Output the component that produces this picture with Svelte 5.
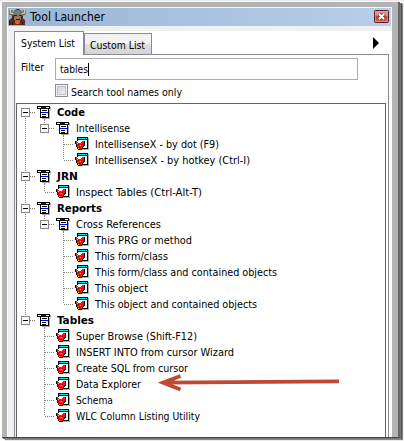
<script>
  const rows = [
    { d: 0, t: 'Code', w: 28, open: true, first: true, guides: [] },
    { d: 1, t: 'Intellisense', w: 54, open: true, last: true, guides: [1] },
    { d: 2, t: 'IntellisenseX - by dot (F9)', w: 124, guides: [1, 0] },
    { d: 2, t: 'IntellisenseX - by hotkey (Ctrl-I)', w: 155, last: true, guides: [1, 0] },
    { d: 0, t: 'JRN', w: 21, open: true, guides: [] },
    { d: 1, t: 'Inspect Tables (Ctrl-Alt-T)', w: 126, last: true, guides: [1] },
    { d: 0, t: 'Reports', w: 45, open: true, guides: [] },
    { d: 1, t: 'Cross References', w: 85, open: true, last: true, guides: [1] },
    { d: 2, t: 'This PRG or method', w: 97, guides: [1, 0] },
    { d: 2, t: 'This form/class', w: 73, guides: [1, 0] },
    { d: 2, t: 'This form/class and contained objects', w: 182, guides: [1, 0] },
    { d: 2, t: 'This object', w: 53, guides: [1, 0] },
    { d: 2, t: 'This object and contained objects', w: 162, last: true, guides: [1, 0] },
    { d: 0, t: 'Tables', w: 37, open: true, last: true, guides: [] },
    { d: 1, t: 'Super Browse (Shift-F12)', w: 121, guides: [0] },
    { d: 1, t: 'INSERT INTO from cursor Wizard', w: 158, guides: [0] },
    { d: 1, t: 'Create SQL from cursor', w: 112, guides: [0] },
    { d: 1, t: 'Data Explorer', w: 65, guides: [0] },
    { d: 1, t: 'Schema', w: 37, guides: [0] },
    { d: 1, t: 'WLC Column Listing Utility', w: 124, last: true, guides: [0] }
  ];
</script>

{#snippet label(text, width, bold = false, size = 11)}
  <svg class="label" class:bold {width} height="16">
    <text x="0" y="12" font-size={size} textLength={width} lengthAdjust="spacingAndGlyphs">{text}</text>
  </svg>
{/snippet}

<div class="screen">
  <div class="window">
    <header>
      <svg class="logo" width="17" height="16" viewBox="0 0 17 16">
        <path fill="#74251d" d="M0 11l4-3 4 4 4-4 4 3v5H0z" />
        <path fill="#282a28" d="M3 6l2-4 3-2h2l3 3 1 5-2 5H5L3 9z" />
        <path fill="#747e7b" d="M4 6V3l3-2h3l3 2v3z" />
        <path fill="#9c7055" d="M5 6h7v5l-3 2-4-2z" />
        <path fill="#222" d="M5 6h3v1H5zm5 0h3v1h-3zM7 10h4v1H7z" />
        <path fill="none" stroke="#5a5139" stroke-width="3" d="M5 5.5L1.8 4.5V1m10.2 4.5l3.2-1V1" />
        <path fill="none" stroke="#d6c78c" stroke-width="1.6" d="M4.5 5L1.5 4V0m11 5l3-1V0" />
        <path fill="#ef5421" d="M6 12h5v2l-1 1H7l-1-1z" />
        <path fill="#1c1413" d="M0 12h1v4H0zm3 1h1v3H3zm10 0h1v3h-1z" />
      </svg>
      <span class="title">{@render label('Tool Launcher', 75, false, 12)}</span>
      <svg class="close" width="15" height="13" viewBox="0 0 15 13">
        <defs>
          <linearGradient id="red" x1="0" y1="0" x2="0" y2="1">
            <stop offset="0" stop-color="#e7a294" />
            <stop offset=".48" stop-color="#d5796c" />
            <stop offset=".5" stop-color="#b7402e" />
            <stop offset="1" stop-color="#d46b56" />
          </linearGradient>
        </defs>
        <rect x=".5" y=".5" width="14" height="12" rx="1" fill="url(#red)" stroke="#561b25" />
        <rect x="1.5" y="1.5" width="12" height="10" fill="none" stroke="#e7a79c" stroke-opacity=".6" />
        <path d="M5 4l5 5M10 4L5 9" stroke="#535666" stroke-width="3.6" />
        <path d="M5 4l5 5M10 4L5 9" stroke="#fff" stroke-width="1.8" />
      </svg>
    </header>
    <main>
      <nav>
        <div class="tab active">{@render label('System List', 54)}</div>
        <div class="tab">{@render label('Custom List', 55)}</div>
        <svg class="next" width="6" height="12" viewBox="0 0 6 12"><path d="M0 0l6 6-6 6z" /></svg>
      </nav>
      <section class="page">
        <div class="filter">
          <span class="caption">{@render label('Filter', 23)}</span>
          <div class="field">{@render label('tables', 28)}<i class="caret"></i></div>
        </div>
        <div class="option"><i class="check"></i>{@render label('Search tool names only', 111)}</div>
        <div class="tree">
          {#each rows as r}
            <div class="row">
              {#each r.guides as g}
                <i class="guide" class:line={g}></i>
              {/each}
              <svg class="joint" width="19" height="16" viewBox="0 0 19 16">
                {#if !r.first}<path class="dots" d="M8.5 0V8" />{/if}
                {#if !r.last}<path class="dots" d="M8.5 8V16" />{/if}
                <path class="dots" d="M9 8.5H19" />
                {#if r.open}
                  <rect x="4.5" y="4.5" width="8" height="8" fill="#fff" stroke="#848484" />
                  <path d="M6 8.5h5" stroke="#000" />
                {/if}
              </svg>
              {#if r.open}
                <svg class="icon" width="16" height="16" viewBox="0 0 16 16" shape-rendering="crispEdges">
                  <path fill="#aaa" d="M14 3h1v3h-1zM13 6h1v9H6v-1h7z" />
                  <path fill="#000" d="M1 2h13v3H1z" />
                  <path fill="#fff" d="M2 3h3v1H2zm8 0h3v1h-3z" />
                  <path fill="#0000d8" d="M6 3h4v1H6z" />
                  <path fill="#000" d="M4 5h9v9H4z" />
                  <path fill="#fff" d="M5 5h7v8H5z" />
                  <path fill="#000" d="M6 6h5v1H6zm0 4h4v1H6zm0 2h4v1H6z" />
                  <path fill="#0000ff" d="M5 8h7v1H5z" />
                  <path fill="#858585" d="M8 15h1v1H8z" />
                </svg>
              {:else}
                <svg class="icon" width="16" height="16" viewBox="0 0 16 16" shape-rendering="crispEdges">
                  <path fill="#aaa" d="M14 2h1v12H8v-1h6z" />
                  <path fill="#000" d="M3 1h11v12H8V5H3z" />
                  <path fill="#00e8f4" d="M4 2h9v1H4z" />
                  <path fill="#fff" d="M4 4h9v8H4z" />
                  <path fill="#000" d="M10 5h1v5h-1zM1 5h1v3H1zM2 8h1v3H2zM3 11h1v2H3zM4 13h4v1H4zM8 11h1v2H8zM9 9h1v2H9z" />
                  <path fill="#f01810" d="M2 5h1v1h1v1h3V6h1V5h2v4H9v2H8v2H4v-2H3V8H2z" />
                  <path fill="#7d0c08" d="M4 8h1v1H4zm3 0h1v1H7zm-2 3h2v1H5z" />
                  <path fill="#ffd000" d="M3 7h1v1H3zm3 2h1v1H6zm-2 3h1v1H4z" />
                </svg>
              {/if}
              <span class="name">{@render label(r.t, r.w, r.d === 0)}</span>
            </div>
          {/each}
        </div>
      </section>
    </main>
  </div>
  <svg class="arrow" width="182" height="22" viewBox="0 0 182 22">
    <path d="M22.5 3L5 9.7l17.500 6.800M5 9.700L181 8.400" fill="none" stroke="#be4b31" stroke-width="3.800" stroke-miterlimit="8" />
  </svg>
</div>

<style>
  :global(body) { background: #fff; overflow: hidden; }
  .screen {
    position: relative;
    box-sizing: border-box;
    width: 404px;
    height: 441px;
    padding: 2px 3px 2px 2px;
    background: linear-gradient(to bottom, #e5e5e5, #fff 2px);
  }
  .window {
    box-sizing: border-box;
    width: 398px;
    height: 436px;
    padding: 5px 6px 0 5px;
    background: #b4b4b4;
    border-bottom: 1px solid #464646;
    box-shadow: 1px 1px 0 #777, 2px 1px 0 #505050, 3px 2px 1px #888;
    border-right: 2px solid #686868;
  }
  header {
    box-sizing: border-box;
    display: flex;
    align-items: flex-start;
    height: 19px;
    border: solid #f7f7f7;
    border-width: 1px 1px 0;
    padding: 1px 2px 0 1px;
    background: linear-gradient(90deg, #9bb5d5, #b7cfe9);
  }
  .title { margin-left: 4px; }
  .close { margin: 1px 0 0 auto; }
  main {
    box-sizing: border-box;
    height: 411px;
    padding: 5px 3px 0 7px;
    background: linear-gradient(90deg, #f0f0f0 8px, transparent 8px), linear-gradient(#f0f0f0 5px, #fff 5px);
    border-left: 1px solid #fff;
  }
  svg { display: block; flex: none; }
  .label { overflow: visible; font-family: "DejaVu Sans Condensed", "DejaVu Sans", sans-serif; fill: #000; }
  .label.bold { font-weight: bold; }
  nav { display: flex; height: 23px; align-items: flex-end; margin-left: -1px; }
  .tab {
    box-sizing: border-box;
    height: 21px;
    width: 68px;
    padding: 3px 0 0 5px;
    border: 1px solid #898c95;
    border-bottom: 0;
    background: linear-gradient(#f2f2f2 45%, #dedede 55%, #d4d4d4);
  }
  .tab.active {
    position: relative;
    width: 70px;
    height: 24px;
    margin-bottom: -1px;
    padding: 3px 0 0 6px;
    background: #fff;
  }
  .next { margin: 0 10px 5px auto; }
  .page {
    box-sizing: border-box;
    height: 383px;
    margin-left: -1px;
    padding: 3px 2px 0 1px;
    border: 1px solid #898c95;
    border-bottom: 0;
  }
  .filter { display: flex; height: 22px; }
  .caption { width: 39px; padding: 1px 0 0 5px; box-sizing: border-box; }
  .field {
    box-sizing: border-box;
    display: flex;
    align-items: center;
    width: 303px;
    height: 22px;
    padding-left: 4px;
    border: 1px solid #ababab;
  }
  .caret { width: 1px; height: 13px; background: #000; }
  .option { display: flex; gap: 3px; height: 23px; padding: 4px 0 0 39px; box-sizing: border-box; }
  .check {
    box-sizing: border-box;
    width: 13px;
    height: 13px;
    border: 1px solid #8e8f8f;
    background: linear-gradient(135deg, #cbcfd5, #f6f6f6);
    box-shadow: inset 0 0 0 1px #f4f4f4, inset 0 0 0 2px #bdc1c7;
  }
  .tree {
    box-sizing: border-box;
    height: 334px;
    border: 1px solid #646464;
    border-bottom: 0;
  }
  .row { display: flex; height: 16px; }
  .guide { width: 19px; height: 16px; }
  .guide.line { background: repeating-linear-gradient(#858585 0 1px, transparent 1px 2px) 8px 0 / 1px 16px no-repeat; }
  .dots { stroke: #858585; stroke-width: 1; stroke-dasharray: 1 1; fill: none; }
  .name { margin-left: 4.500px; }
  .arrow { position: absolute; left: 158px; top: 373px; }
</style>
